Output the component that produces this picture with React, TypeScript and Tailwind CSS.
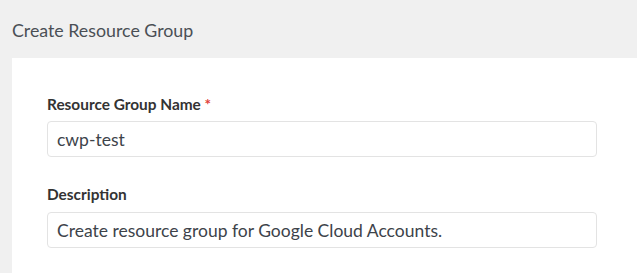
import React from "react";

export default function App() {
  return (
    <div className="h-[273px] w-full bg-[#f0f0f0] flex flex-col" style={{ fontFamily: "Lato, 'Open Sans', sans-serif" }}>
      <div className="h-[58px] px-[12px] flex items-center">
        <h1 className="text-[17.8px] leading-[22px] text-[#4a4f55] font-normal pt-[1px]">Create Resource Group</h1>
      </div>
      <div className="flex-1 ml-[12px] bg-white pl-[35px] pr-[40px] pt-[36px]">
        <div className="flex flex-col">
          <label className="text-[15.4px] leading-[20px] font-bold text-[#333333]">
            Resource Group Name <span className="text-[#e0403a]">*</span>
          </label>
          <input
            readOnly
            value="cwp-test"
            className="mt-[7px] h-[36px] w-full rounded-[4px] border border-[#e3e3e3] px-[9px] text-[17.5px] text-[#3d434a] outline-none"
          />
        </div>
        <div className="flex flex-col mt-[27px]">
          <label className="text-[15.4px] leading-[20px] font-bold text-[#333333]">Description</label>
          <input
            readOnly
            value="Create resource group for Google Cloud Accounts."
            className="mt-[8px] h-[36px] w-full rounded-[4px] border border-[#e3e3e3] px-[9px] text-[17.5px] text-[#3d434a] outline-none"
          />
        </div>
      </div>
    </div>
  );
}
